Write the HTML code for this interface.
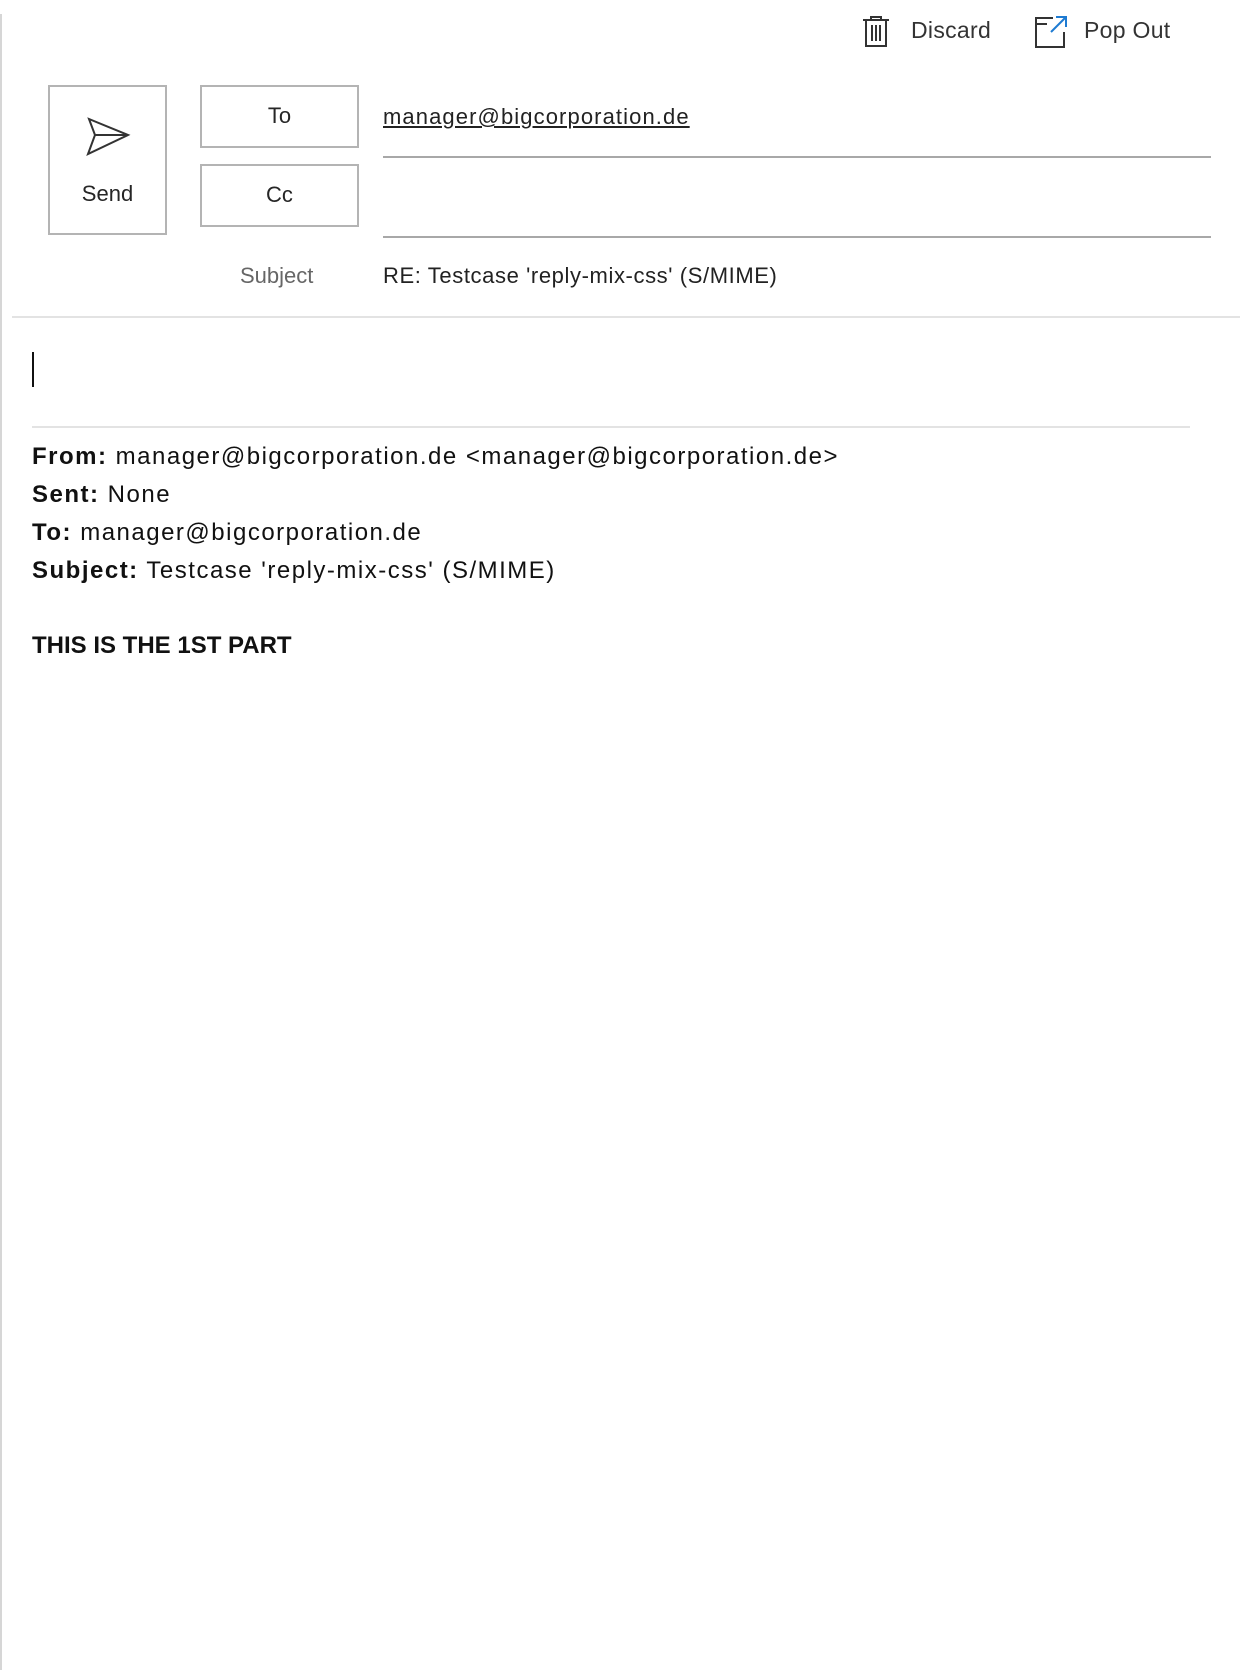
<!DOCTYPE html>
<html><head><meta charset="utf-8"><style>
html,body{margin:0;padding:0;background:#fff;width:1240px;height:1670px;overflow:hidden;position:relative;font-family:"Liberation Sans",sans-serif;color:#222}
.a{position:absolute}
.box{position:absolute;border:2px solid #b4b4b4;box-sizing:border-box;background:#fff}
.lbl{font-size:22px;color:#262626;text-align:center;position:absolute;width:100%}
.body{font-size:24px;color:#111;left:32px;white-space:nowrap;letter-spacing:1.5px}
</style></head><body>
<div class="a" style="left:0;top:14px;width:2px;height:1656px;background:#d6d6d6"></div>

<svg class="a" style="left:860px;top:15px" width="32" height="34" viewBox="0 0 32 34"><g fill="none" stroke="#333" stroke-width="2"><path d="M3 5H29"/><path d="M11 5V2H21V5"/><path d="M6 5V31H26V5"/><path d="M12 10V26M16 10V26M20 10V26"/></g></svg>
<div class="a" style="left:911px;top:17px;font-size:23px;color:#333;letter-spacing:0.3px">Discard</div>
<svg class="a" style="left:1033px;top:14px" width="36" height="36" viewBox="0 0 36 36"><g fill="none" stroke-width="2"><path d="M20 4H3V33H31V18" stroke="#333"/><path d="M3 10H14" stroke="#333"/><path d="M18 18L32 4M23 3H33V13" stroke="#1e7bd2"/></g></svg>
<div class="a" style="left:1084px;top:17px;font-size:23px;color:#333;letter-spacing:0.3px">Pop Out</div>

<div class="box" style="left:48px;top:85px;width:119px;height:150px">
<svg class="a" style="left:36px;top:28px" width="46" height="42" viewBox="0 0 46 42"><path d="M3 4L42 20L2 39L9 20Z M9 20H42" fill="none" stroke="#333" stroke-width="2" stroke-linejoin="miter"/></svg>
<div class="lbl" style="top:94px">Send</div></div>

<div class="box" style="left:200px;top:85px;width:159px;height:63px"><div class="lbl" style="top:16px">To</div></div>
<div class="box" style="left:200px;top:164px;width:159px;height:63px"><div class="lbl" style="top:16px">Cc</div></div>

<div class="a" style="left:383px;top:104px;font-size:22px;color:#222;text-decoration:underline;letter-spacing:1.1px">manager@bigcorporation.de</div>
<div class="a" style="left:383px;top:156px;width:828px;height:2px;background:#a8a8a8"></div>
<div class="a" style="left:383px;top:236px;width:828px;height:2px;background:#a8a8a8"></div>
<div class="a" style="left:240px;top:263px;font-size:22px;color:#666">Subject</div>
<div class="a" style="left:383px;top:263px;font-size:22px;color:#222;letter-spacing:0.6px">RE: Testcase 'reply-mix-css' (S/MIME)</div>
<div class="a" style="left:12px;top:316px;width:1228px;height:2px;background:#e3e3e3"></div>

<div class="a" style="left:32px;top:352px;width:2px;height:35px;background:#111"></div>
<div class="a" style="left:32px;top:426px;width:1158px;height:2px;background:#e3e3e3"></div>

<div class="a body" style="top:443px"><b>From:</b> manager@bigcorporation.de &lt;manager@bigcorporation.de&gt;</div>
<div class="a body" style="top:481px"><b>Sent:</b> None</div>
<div class="a body" style="top:519px"><b>To:</b> manager@bigcorporation.de</div>
<div class="a body" style="top:557px"><b>Subject:</b> Testcase 'reply-mix-css' (S/MIME)</div>
<div class="a body" style="top:632px;letter-spacing:0"><b>THIS IS THE 1ST PART</b></div>
</body></html>
